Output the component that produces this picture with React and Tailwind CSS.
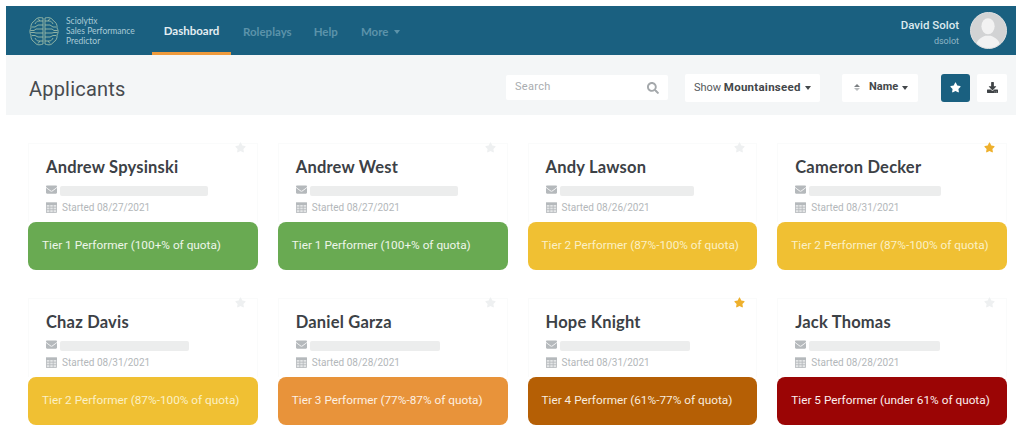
import React from "react";
import { FaEnvelope, FaStar, FaDownload, FaSearch } from "react-icons/fa";

const TIERS = {
  1: { label: "Tier 1 Performer (100+% of quota)", bg: "bg-[#69aa52]", fg: "text-[#eef6ea]" },
  2: { label: "Tier 2 Performer (87%-100% of quota)", bg: "bg-[#f0c033]", fg: "text-[#fbf0c6]" },
  3: { label: "Tier 3 Performer (77%-87% of quota)", bg: "bg-[#e8933a]", fg: "text-[#fdf0e2]" },
  4: { label: "Tier 4 Performer (61%-77% of quota)", bg: "bg-[#b55f05]", fg: "text-[#f8ecdf]" },
  5: { label: "Tier 5 Performer (under 61% of quota)", bg: "bg-[#9b0505]", fg: "text-[#fbeeee]" },
};

const PEOPLE = [
  { name: "Andrew Spysinski", date: "08/27/2021", tier: 1, mask: "w-[148px]" },
  { name: "Andrew West", date: "08/27/2021", tier: 1, mask: "w-[148px]" },
  { name: "Andy Lawson", date: "08/26/2021", tier: 2, mask: "w-[134px]" },
  { name: "Cameron Decker", date: "08/31/2021", tier: 2, mask: "w-[132px]", starred: true },
  { name: "Chaz Davis", date: "08/31/2021", tier: 2, mask: "w-[129px]" },
  { name: "Daniel Garza", date: "08/28/2021", tier: 3, mask: "w-[130px]" },
  { name: "Hope Knight", date: "08/31/2021", tier: 4, mask: "w-[130px]", starred: true },
  { name: "Jack Thomas", date: "08/28/2021", tier: 5, mask: "w-[131px]" },
];

function BrainLogo() {
  const half = [
    "M14 2C10 1 7 2 5.500 5C3 6 1.500 9 2 12C0.500 14 0.500 17 2 19C1.500 22 3 25 5.500 26C7 29 10 29.500 14 28",
    "M14 5H10C8 5 7 6 6 8", "M14 9H9L6 11H3", "M14 13H7L5 14.500H1.500", "M14 17H7L5 16.500H1.500",
    "M14 21H9L6 19.500H3", "M14 25H10C8 25 7 24 6 22", "M11 5L9 2.500", "M11 25L9 27.500", "M14 2V28",
  ];
  return (
    <svg width="30" height="30" viewBox="0 0 30 30" fill="none" stroke="#a9c6ad" strokeWidth="0.8" className="shrink-0">
      {half.map((d) => <path key={d} d={d} />)}
      <g transform="matrix(-1 0 0 1 30 0)">
        {half.map((d) => <path key={d} d={d} />)}
      </g>
    </svg>
  );
}

function CalendarIcon() {
  return (
    <svg width="11" height="11" viewBox="0 0 11 11" className="shrink-0" fill="none" stroke="#b5b9bc" strokeWidth="0.8">
      <rect x="0.500" y="1" width="10" height="9.500" fill="#e4e6e7" />
      <rect x="0" y="0.500" width="11" height="2.500" fill="#b5b9bc" stroke="none" />
      <path d="M0.500 5.200H10.500M0.500 7.700H10.500M3.800 3V10.500M7.200 3V10.500" />
    </svg>
  );
}

function Caret({ className }) {
  return <span className={`inline-block w-0 h-0 border-x-[3.5px] border-x-transparent border-t-[4px] ${className}`} />;
}

function Card({ p }) {
  const t = TIERS[p.tier];
  return (
    <div className="relative">
      <FaStar className={`absolute top-[-1px] right-[12px] text-[11px] ${p.starred ? "text-[#eeb02c]" : "text-[#eef0f1]"}`} />
      <div className="border-x border-t border-[#fafbfb] pt-[11px] px-[17px] h-[79px]">
        <div className="h-[24px] leading-[24px] text-[16.5px] font-bold tracking-[0.2px] text-[#3c4146] font-['Lato',sans-serif]">{p.name}</div>
        <div className="mt-[1px] h-[18px] flex items-center">
          <FaEnvelope className="text-[11px] text-[#b5b9bc] shrink-0" />
          <div className={`ml-[3px] h-[10px] mt-[3px] rounded-[2px] bg-[#eceded] ${p.mask}`} />
        </div>
        <div className="h-[18px] flex items-center text-[10px] text-[#b3b7ba] font-['Roboto',sans-serif]">
          <CalendarIcon />
          <span className="ml-[5px]">Started {p.date}</span>
        </div>
      </div>
      <div className={`h-[48px] rounded-[8px] pl-[14px] flex items-center whitespace-nowrap text-[11.8px] font-['Roboto',sans-serif] ${t.bg} ${t.fg}`}>
        {t.label}
      </div>
    </div>
  );
}

export default function App() {
  return (
    <div className="w-[1024px] h-[437px] overflow-hidden bg-white font-['Roboto',sans-serif]">
      <div className="pt-[6px] pl-[6px] pr-[8px]">
        <header className="h-[49px] bg-[#1a6080] flex items-center pl-[23px] pr-[9px]">
          <BrainLogo />
          <div className="ml-[7px] w-[81px] text-[8.5px] leading-[10px] text-[#a9cad6] font-['Lato',sans-serif] whitespace-nowrap">
            <div>Sciolytix</div>
            <div>Sales Performance</div>
            <div>Predictor</div>
          </div>
          <nav className="ml-[5px] self-stretch flex items-stretch text-[11.5px] font-bold font-['Lato',sans-serif]">
            <div className="w-[79px] pt-[3px] flex items-center justify-center text-[#e4eef2] border-b-[3px] border-[#ee9a3c]">Dashboard</div>
            <div className="ml-[12px] pt-[3px] flex items-center text-[#5c93aa]">Roleplays</div>
            <div className="ml-[22px] pt-[3px] flex items-center text-[#5c93aa]">Help</div>
            <div className="ml-[23px] pt-[3px] flex items-center gap-[6px] text-[#5c93aa]">More <Caret className="border-t-[#5c93aa]" /></div>
          </nav>
          <div className="ml-auto flex items-center">
            <div className="text-right mr-[11px] mt-[4px]">
              <div className="text-[11.5px] font-medium leading-[14px] text-[#dce9ee]">David Solot</div>
              <div className="text-[9px] leading-[12px] mt-[3px] text-[#8fb6c6]">dsolot</div>
            </div>
            <div className="w-[37px] h-[37px] rounded-full overflow-hidden bg-[#d2d3d4] border border-[#dfe0e1]">
              <svg viewBox="0 0 37 37" width="35" height="35">
                <ellipse cx="18" cy="14" rx="7" ry="8.500" fill="#f2f2f2" />
                <path d="M5 37C5 29 10 26 15 24H21C26 26 31 29 31 37Z" fill="#f2f2f2" />
              </svg>
            </div>
          </div>
        </header>
        <div className="h-[60px] bg-[#f4f6f7] flex items-center pl-[23px] pr-[9px] pt-[5px]">
          <h1 className="pt-[3px] text-[20px] tracking-[0.2px] text-[#474b4f] font-['Roboto',sans-serif]">Applicants</h1>
          <div className="ml-auto flex items-center text-[11px]">
            <div className="w-[162px] h-[25px] bg-white rounded-[2px] flex items-center justify-between pl-[9px] pr-[9px] text-[#a9adb0] tracking-[0.3px]">
              <span>Search</span>
              <FaSearch className="text-[12px] text-[#a4a8ab]" />
            </div>
            <div className="ml-[17px] w-[135px] h-[28px] bg-white rounded-[2px] flex items-center pl-[9px] gap-[4px] text-[#55595c] whitespace-nowrap">
              <span>Show <span className="font-bold text-[11.5px] tracking-[0.25px] text-[#43474a]">Mountainseed</span></span>
              <Caret className="border-t-[#43474a]" />
            </div>
            <div className="ml-[22px] w-[76px] h-[28px] bg-white rounded-[2px] flex items-center pl-[12px] gap-[4px] font-bold text-[#43474a]">
              <span className="flex flex-col gap-[1px] mr-[5px]">
                <span className="w-0 h-0 border-x-[3px] border-x-transparent border-b-[3px] border-b-[#7b7f82]" />
                <span className="w-0 h-0 border-x-[3px] border-x-transparent border-t-[3px] border-t-[#b9bcbe]" />
              </span>
              <span>Name</span>
              <Caret className="border-t-[#43474a]" />
            </div>
            <button className="ml-[23px] w-[29px] h-[28px] bg-[#1a6080] rounded-[3px] flex items-center justify-center">
              <FaStar className="text-[11px] text-white" />
            </button>
            <button className="ml-[7px] w-[30px] h-[28px] bg-white rounded-[2px] flex items-center justify-center">
              <FaDownload className="text-[11px] text-[#3f4346]" />
            </button>
          </div>
        </div>
      </div>
      <main className="mt-[28px] ml-[28px] w-[979px] grid grid-cols-4 gap-x-[20px] gap-y-[28px]">
        {PEOPLE.map((p) => <Card key={p.name} p={p} />)}
      </main>
    </div>
  );
}
